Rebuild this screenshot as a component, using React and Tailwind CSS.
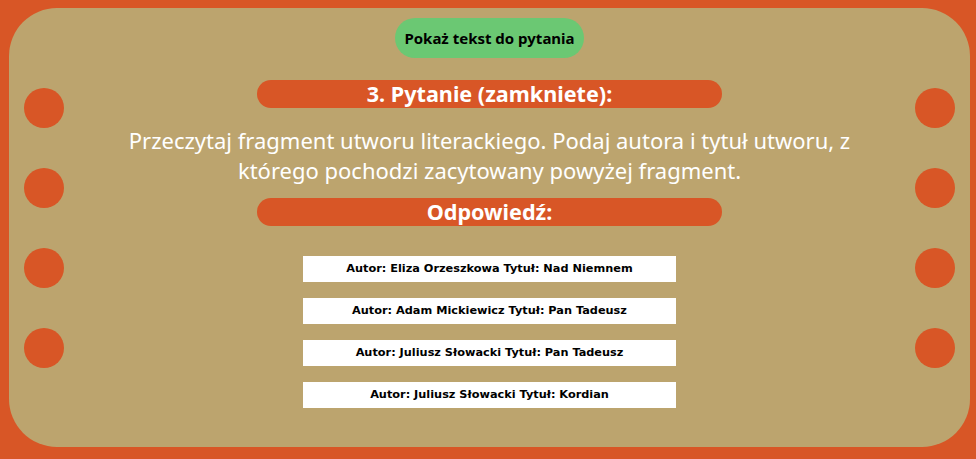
import React from 'react'

const answers = [
  'Autor: Eliza Orzeszkowa Tytuł: Nad Niemnem',
  'Autor: Adam Mickiewicz Tytuł: Pan Tadeusz',
  'Autor: Juliusz Słowacki Tytuł: Pan Tadeusz',
  'Autor: Juliusz Słowacki Tytuł: Kordian',
]

function Holes() {
  return (
    <div className="w-[40px] shrink-0 pt-[80px] flex flex-col gap-[40px]">
      {[0, 1, 2, 3].map(i => (
        <div key={i} className="w-[40px] h-[40px] rounded-full bg-[#d85626]" />
      ))}
    </div>
  )
}

export default function App() {
  return (
    <div className="w-[976px] h-[459px] bg-[#d85626] pt-[8px] pl-[9px] pr-[6px] pb-[12px] font-['Noto_Sans',sans-serif]">
      <div className="h-full bg-[#bca46e] rounded-[48px] flex px-[15px]">
        <Holes />

        <div className="flex-1 flex flex-col items-center pt-[10px]">
          <button className="h-[40px] w-[189px] rounded-full bg-[#6bc873] text-black font-bold text-[15px]">
            Pokaż tekst do pytania
          </button>

          <div className="mt-[22px] w-[465px] h-[28px] rounded-full bg-[#d85626] text-white font-bold text-[21.6px] leading-[28px] text-center">
            3. Pytanie (zamkniete):
          </div>

          <p className="mt-[17px] text-white text-[22px] leading-[30px] text-center w-[760px]">
            Przeczytaj fragment utworu literackiego. Podaj autora i tytuł utworu, z którego pochodzi zacytowany powyżej fragment.
          </p>

          <div className="mt-[13px] w-[465px] h-[28px] rounded-full bg-[#d85626] text-white font-bold text-[21.6px] leading-[28px] text-center">
            Odpowiedź:
          </div>

          <div className="mt-[30px] flex flex-col gap-[16px]">
            {answers.map(a => (
              <div key={a} className="w-[373px] h-[26px] bg-white flex items-center justify-center text-black font-bold text-[11.3px] font-['DejaVu_Sans',sans-serif]">
                {a}
              </div>
            ))}
          </div>
        </div>

        <Holes />
      </div>
    </div>
  )
}
